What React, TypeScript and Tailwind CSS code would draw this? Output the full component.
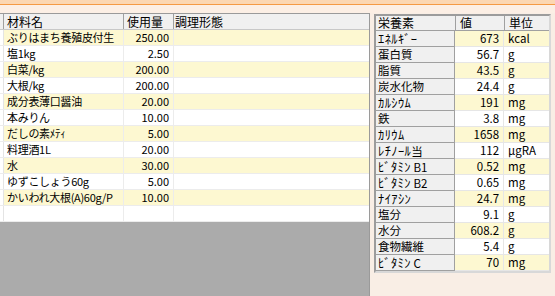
import React from 'react';

const font = { fontFamily: '"Noto Sans CJK JP", "Liberation Sans", sans-serif' };

const ingredients: [string, string][] = [
  ['ぶりはまち養殖皮付生', '250.00'],
  ['塩1kg', '2.50'],
  ['白菜/kg', '200.00'],
  ['大根/kg', '200.00'],
  ['成分表薄口醤油', '20.00'],
  ['本みりん', '10.00'],
  ['だしの素ﾒﾃｨ', '5.00'],
  ['料理酒1L', '20.00'],
  ['水', '30.00'],
  ['ゆずこしょう60g', '5.00'],
  ['かいわれ大根(A)60g/P', '10.00'],
  ['', ''],
];

const nutrients: [string, string, string][] = [
  ['ｴﾈﾙｷﾞｰ', '673', 'kcal'],
  ['蛋白質', '56.7', 'g'],
  ['脂質', '43.5', 'g'],
  ['炭水化物', '24.4', 'g'],
  ['ｶﾙｼｳﾑ', '191', 'mg'],
  ['鉄', '3.8', 'mg'],
  ['ｶﾘｳﾑ', '1658', 'mg'],
  ['ﾚﾁﾉｰﾙ当', '112', 'μgRA'],
  ['ﾋﾞﾀﾐﾝ B1', '0.52', 'mg'],
  ['ﾋﾞﾀﾐﾝ B2', '0.65', 'mg'],
  ['ﾅｲｱｼﾝ', '24.7', 'mg'],
  ['塩分', '9.1', 'g'],
  ['水分', '608.2', 'g'],
  ['食物繊維', '5.4', 'g'],
  ['ﾋﾞﾀﾐﾝ C', '70', 'mg'],
];

// half-width katakana look tiny in Noto, so those runs get a bigger size
const Label: React.FC<{ text: string }> = ({ text }) => {
  const parts = text.match(/[\uFF61-\uFF9F]+|[^\uFF61-\uFF9F]+/g) ?? [];
  return (
    <>
      {parts.map((p, i) =>
        /[\uFF61-\uFF9F]/.test(p) ? (
          <span key={i} className="text-[12.5px] tracking-[0.4px]">{p}</span>
        ) : (
          <span key={i}>{p}</span>
        )
      )}
    </>
  );
};

const IngredientTable: React.FC = () => (
  <div className="w-[370px] flex flex-col border-t border-r border-[#9a9a9a] bg-[#ababab]">
    <div className="flex h-4 bg-[#f0f0f0] border-b border-[#c8c8c8] text-[12px] leading-[15px] text-black">
      <div className="w-[4px] border-r border-[#a0a0a0]" />
      <div className="w-[120px] pl-[3px] border-r border-[#a0a0a0]">材料名</div>
      <div className="w-[50px] pl-[3px] border-r border-[#a0a0a0]">使用量</div>
      <div className="flex-1 pl-[1px]">調理形態</div>
    </div>
    {ingredients.map(([name, qty], i) => (
      <div
        key={i}
        className={`flex h-4 border-b border-[#ececec] text-[11px] leading-[15px] text-black ${i % 2 === 0 && name ? 'bg-[#fdf8d1]' : 'bg-white'}`}
      >
        <div className="w-[4px] bg-white border-r border-[#e4e4e4]" />
        <div className="w-[120px] pl-[3px] border-r border-[#ececec] whitespace-nowrap tracking-[-0.3px]">{name}</div>
        <div className="w-[50px] pr-[4px] text-right border-r border-[#ececec]">{qty}</div>
        <div className="flex-1" />
      </div>
    ))}
    <div className="flex-1 bg-[#ababab]" />
  </div>
);

const NutrientTable: React.FC = () => (
  <div className="w-[177px] self-start border-2 border-[#9c9c9c] border-r-[#d8d8d8] border-b-[#d8d8d8]">
    <div className="flex h-[15px] bg-[#f0f0f0] border-b border-[#a0a0a0] text-[12px] leading-[14px] text-black">
      <div className="w-[80px] pl-[2px] border-r border-[#a0a0a0]">栄養素</div>
      <div className="w-[49px] pl-[4px] border-r border-[#a0a0a0]">値</div>
      <div className="flex-1 pl-[4px]">単位</div>
    </div>
    {nutrients.map(([label, val, unit], i) => (
      <div key={label} className="flex h-4 text-[11.5px] leading-[15px] text-black">
        <div className="w-[80px] pl-[2px] bg-[#f0f0f0] border-r border-b border-[#a0a0a0] whitespace-nowrap">
          <Label text={label} />
        </div>
        <div className={`flex w-[95px] border-b border-[#e6e6e6] ${i % 2 === 0 ? 'bg-[#fdf8d1]' : 'bg-white'}`}>
          <div className="w-[49px] pr-[4px] text-right border-r border-[#e6e6e6]">{val}</div>
          <div className="flex-1 pl-[4px]">{unit}</div>
        </div>
      </div>
    ))}
  </div>
);

export default function App() {
  return (
    <div className="w-[555px] h-[296px] flex flex-col bg-[#f9eee5] overflow-hidden" style={font}>
      <div className="h-[4px] bg-[#fcd7b2]" />
      <div className="h-[1px] bg-[#f59a44]" />
      <div className="h-[8px] bg-[#fcefe5]" />
      <div className="flex flex-1 min-h-0">
        <IngredientTable />
        <div className="pl-[4px] pt-[1px]">
          <NutrientTable />
        </div>
      </div>
    </div>
  );
}
